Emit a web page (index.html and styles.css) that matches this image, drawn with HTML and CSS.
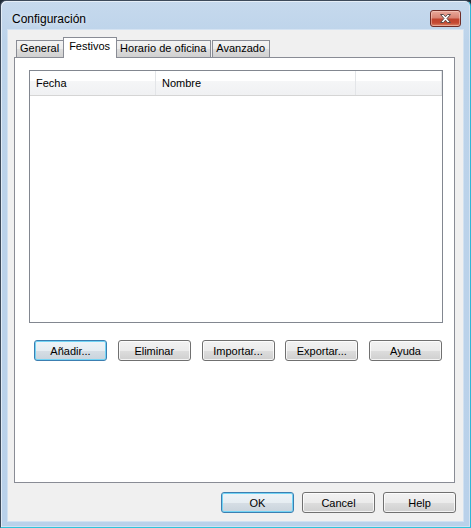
FILE: index.html
```html
<!DOCTYPE html>
<html lang="es">
<head>
<meta charset="utf-8">
<title>Configuración</title>
<link rel="stylesheet" href="styles.css">
</head>
<body>
<div class="window">
  <div class="titlebar">
    <span class="title">Configuración</span>
    <button class="close" aria-label="Cerrar">
      <svg width="15" height="11" viewBox="0 0 15 11">
        <path d="M2.5 1.5 L5.5 1.5 L7.5 3.8 L9.5 1.5 L12.5 1.5 L9 5.5 L12.5 9.5 L9.5 9.5 L7.5 7.2 L5.5 9.5 L2.5 9.5 L6 5.5 Z" fill="#ffffff" stroke="#5a4a48" stroke-width="1" stroke-linejoin="round"/>
      </svg>
    </button>
  </div>
  <div class="client">
    <div class="tabstrip">
      <div class="tab">General</div>
      <div class="tab selected">Festivos</div>
      <div class="tab">Horario de oficina</div>
      <div class="tab">Avanzado</div>
    </div>
    <div class="panel">
      <div class="listview">
        <div class="lv-header">
          <div class="col col-fecha">Fecha</div>
          <div class="col col-nombre">Nombre</div>
          <div class="col col-fill"></div>
        </div>
        <div class="lv-body"></div>
      </div>
      <div class="actions">
        <button class="btn default">Añadir...</button>
        <button class="btn">Eliminar</button>
        <button class="btn">Importar...</button>
        <button class="btn">Exportar...</button>
        <button class="btn">Ayuda</button>
      </div>
    </div>
    <div class="footer">
      <button class="btn default">OK</button>
      <button class="btn">Cancel</button>
      <button class="btn">Help</button>
    </div>
  </div>
</div>
</body>
</html>
```

FILE: styles.css
```css
html, body {
  margin: 0;
  padding: 0;
  background: #1e2a36;
}

body {
  font-family: "Liberation Sans", Arial, sans-serif;
  font-size: 11px;
  color: #000;
}

.window {
  box-sizing: border-box;
  width: 471px;
  height: 528px;
  border: 1px solid #3d4a5a;
  border-right-color: #2fb6d6;
  border-bottom-color: #2ec4dc;
  border-radius: 6px 6px 0 0;
  background: linear-gradient(to bottom, #c6d9ed 0px, #bcd3ea 40px, #b9d1ea 100%);
  box-shadow: inset 1px 1px 0 rgba(255,255,255,0.55), inset -1px -1px 0 rgba(255,255,255,0.35);
  display: flex;
  flex-direction: column;
}

.titlebar {
  height: 29px;
  flex: none;
  display: flex;
  align-items: flex-start;
  justify-content: space-between;
}

.title {
  font-size: 12px;
  margin: 11px 0 0 11px;
  color: #000;
  text-shadow: 0 0 6px rgba(255,255,255,0.9);
}

.close {
  box-sizing: border-box;
  width: 31px;
  height: 17px;
  margin: 9px 9px 0 0;
  padding: 0;
  border: 1px solid #6f2d28;
  border-radius: 3px;
  background: linear-gradient(to bottom, #e9a99b 0%, #d98474 45%, #c0432e 55%, #c54a33 80%, #dc8a6e 100%);
  box-shadow: inset 0 0 0 1px rgba(255,220,210,0.45);
  display: flex;
  align-items: center;
  justify-content: center;
}

.client {
  flex: 1;
  margin: 0 7px 6px 7px;
  background: #f0f0f0;
  padding: 0 8px 0 6px;
  display: flex;
  flex-direction: column;
  box-shadow: 0 0 0 1px rgba(255,255,255,0.35);
}

.tabstrip {
  margin-top: 7px;
  height: 20px;
  padding-left: 2px;
  display: flex;
  align-items: flex-end;
  position: relative;
  z-index: 1;
}

.tab {
  box-sizing: border-box;
  height: 17px;
  padding: 0 4px 0 3px;
  margin-left: 1px;
  border: 1px solid #898c95;
  border-bottom: none;
  background: linear-gradient(to bottom, #f3f3f3 0%, #ebebeb 50%, #dddddd 51%, #d0d0d0 100%);
  line-height: 15px;
  white-space: nowrap;
}

.tab:first-child {
  margin-left: 0;
}

.tab.selected {
  height: 21px;
  margin: 0 -2px -1px -1px;
  padding: 0 6px 0 5px;
  background: #ffffff;
  line-height: 16px;
  position: relative;
  z-index: 2;
}

.panel {
  box-sizing: border-box;
  height: 426px;
  border: 1px solid #898c95;
  background: #ffffff;
  padding: 12px 11px 0 14px;
  display: flex;
  flex-direction: column;
}

.listview {
  box-sizing: border-box;
  height: 253px;
  border: 1px solid #828790;
  background: #ffffff;
  display: flex;
  flex-direction: column;
}

.lv-header {
  height: 24px;
  flex: none;
  display: flex;
  border-bottom: 1px solid #d5d5d5;
  background: linear-gradient(to bottom, #ffffff 0%, #ffffff 40%, #f5f6f7 41%, #f0f1f3 100%);
}

.col {
  box-sizing: border-box;
  height: 100%;
  padding-left: 6px;
  line-height: 25px;
  border-right: 1px solid #e3e5e8;
}

.col-fecha { width: 126px; }
.col-nombre { width: 200px; }
.col-fill { width: 86px; }

.lv-body {
  flex: 1;
}

.actions {
  margin: 17px 1px 0 5px;
  display: flex;
  justify-content: space-between;
}

.btn {
  box-sizing: border-box;
  width: 73px;
  height: 21px;
  padding: 0;
  font-family: "Liberation Sans", Arial, sans-serif;
  font-size: 11px;
  color: #000;
  border: 1px solid #707070;
  border-radius: 3px;
  background: linear-gradient(to bottom, #f2f2f2 0%, #ebebeb 50%, #dddddd 51%, #cfcfcf 100%);
  box-shadow: inset 0 0 0 1px rgba(255,255,255,0.75);
}

.btn.default {
  border-color: #3c7fb1;
  box-shadow: inset 0 0 0 1px #73d4f5;
  background: linear-gradient(to bottom, #eef4f8 0%, #e6edf2 50%, #d6dee5 51%, #c9d3dc 100%);
}

.footer {
  margin: 9px -1px 0 0;
  display: flex;
  justify-content: flex-end;
  gap: 8px;
}
```
